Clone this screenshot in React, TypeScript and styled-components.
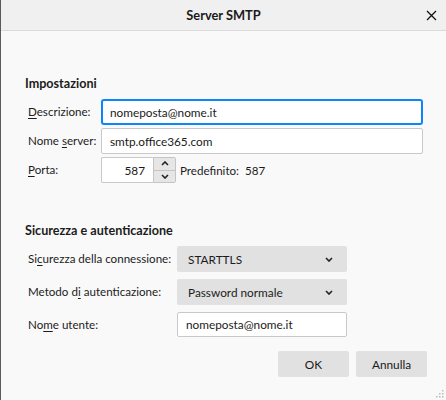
import * as React from 'react';
import styled, { createGlobalStyle } from 'styled-components';

const GlobalStyle = createGlobalStyle`
  html, body {
    margin: 0;
    padding: 0;
    background: #f9f9f9;
  }
  * {
    box-sizing: border-box;
  }
`;

const Chevron = ({ up }: { up?: boolean }) => (
  <svg width="8" height="5" viewBox="0 0 8 5">
    <polyline
      points={up ? '1,4 4,1 7,4' : '1,1 4,4 7,1'}
      fill="none"
      stroke="#222"
      strokeWidth="1.6"
    />
  </svg>
);

export default function App() {
  return (
    <>
      <GlobalStyle />
      <Frame>
        <TitleBar>
          <span />
          <Title>Server SMTP</Title>
          <CloseBtn>
            <svg width="11" height="11" viewBox="0 0 11 11">
              <path d="M1 1 L10 10 M10 1 L1 10" stroke="#111" strokeWidth="1.3" />
            </svg>
          </CloseBtn>
        </TitleBar>

        <Content>
          <Section $top={44}>
            <Heading>Impostazioni</Heading>
            <FormGrid $labelWidth={73} $gap={3}>
              <Label><u>D</u>escrizione:</Label>
              <TextInput $focused defaultValue="nomeposta@nome.it" $width={322} />
              <Label>Nome <u>s</u>erver:</Label>
              <TextInput defaultValue="smtp.office365.com" $width={322} />
              <Label><u>P</u>orta:</Label>
              <PortRow>
                <PortInput defaultValue="587" />
                <Spinner>
                  <SpinBtn><Chevron up /></SpinBtn>
                  <SpinBtn><Chevron /></SpinBtn>
                </Spinner>
                <DefaultText>Predefinito:&nbsp;&nbsp;587</DefaultText>
              </PortRow>
            </FormGrid>
          </Section>

          <Section $top={39}>
            <Heading>Sicurezza e autenticazione</Heading>
            <FormGrid $labelWidth={149} $gap={7}>
              <Label>Si<u>c</u>urezza della connessione:</Label>
              <Select>
                STARTTLS
                <Chevron />
              </Select>
              <Label>Metodo d<u>i</u> autenticazione:</Label>
              <Select>
                Password normale
                <Chevron />
              </Select>
              <Label>No<u>m</u>e utente:</Label>
              <TextInput defaultValue="nomeposta@nome.it" $width={170} $small />
            </FormGrid>
          </Section>

          <Buttons>
            <Button>OK</Button>
            <Button>Annulla</Button>
          </Buttons>
        </Content>

        <Grip width="8" height="8" viewBox="0 0 8 8">
          <rect x="6" y="0" width="1.5" height="1.5" fill="#bbb" />
          <rect x="3" y="3" width="1.5" height="1.5" fill="#bbb" />
          <rect x="6" y="3" width="1.5" height="1.5" fill="#bbb" />
          <rect x="0" y="6" width="1.5" height="1.5" fill="#bbb" />
          <rect x="3" y="6" width="1.5" height="1.5" fill="#bbb" />
          <rect x="6" y="6" width="1.5" height="1.5" fill="#bbb" />
        </Grip>
      </Frame>
    </>
  );
}

const Frame = styled.div`
  position: relative;
  width: 446px;
  height: 400px;
  background: #f9f9f9;
  border-left: 1px solid #5a5a5a;
  font-family: Lato, "Noto Sans", sans-serif;
  color: #1c1c1c;
  overflow: hidden;
`;

const TitleBar = styled.div`
  display: grid;
  grid-template-columns: 1fr auto 1fr;
  align-items: center;
  height: 31px;
  background: #f0f0f0;
  border-bottom: 1px solid #dadada;
`;

const Title = styled.div`
  font-size: 12.8px;
  font-weight: 700;
  color: #1a1a1a;
`;

const CloseBtn = styled.div`
  justify-self: end;
  display: flex;
  align-items: center;
  padding-right: 9px;
`;

const Content = styled.div`
  display: flex;
  flex-direction: column;
  padding: 0 19px 0 24px;
`;

const Section = styled.section<{ $top: number }>`
  display: flex;
  flex-direction: column;
  gap: 6px;
  margin-top: ${p => p.$top}px;
`;

const Heading = styled.div`
  font-size: 12.6px;
  font-weight: 700;
  line-height: 18px;
`;

const FormGrid = styled.div<{ $labelWidth: number; $gap: number }>`
  display: grid;
  grid-template-columns: ${p => p.$labelWidth}px auto;
  row-gap: ${p => p.$gap}px;
  align-items: center;
  justify-items: start;
  padding-left: 3px;
`;

const Label = styled.label`
  font-size: 11.6px;
  line-height: 16px;
  white-space: nowrap;

  u {
    text-decoration-thickness: 1px;
    text-underline-offset: 2px;
  }
`;

const TextInput = styled.input<{ $focused?: boolean; $width: number; $small?: boolean }>`
  width: ${p => p.$width}px;
  height: ${p => (p.$small ? 25 : 26)}px;
  padding: 0 ${p => (p.$focused ? 7 : 8)}px;
  font-family: inherit;
  font-size: 11.8px;
  color: #1a1a1a;
  background: #fff;
  border: ${p => (p.$focused ? '2px solid #0a84ff' : '1px solid #c9c9c9')};
  border-radius: ${p => (p.$focused ? 3 : 2)}px;
  outline: none;
`;

const PortRow = styled.div`
  display: flex;
  align-items: center;
`;

const PortInput = styled.input`
  width: 52px;
  height: 26px;
  padding: 0 8px;
  text-align: right;
  font-family: inherit;
  font-size: 11.8px;
  color: #1a1a1a;
  background: #fff;
  border: 1px solid #c9c9c9;
  border-right: none;
  border-radius: 2px 0 0 2px;
  outline: none;
`;

const Spinner = styled.div`
  display: flex;
  flex-direction: column;
  width: 23px;
  height: 26px;
  border: 1px solid #c4c4c4;
  border-radius: 0 2px 2px 0;
`;

const SpinBtn = styled.div`
  flex: 1;
  display: flex;
  align-items: center;
  justify-content: center;
  background: #e6e6e6;

  & + & {
    border-top: 1px solid #c4c4c4;
  }
`;

const DefaultText = styled.span`
  margin-left: 4px;
  font-size: 11.6px;
`;

const Select = styled.div`
  display: flex;
  align-items: center;
  justify-content: space-between;
  width: 170px;
  height: 26px;
  padding: 0 14px 0 11px;
  font-size: 11.8px;
  background: #e1e1e1;
  border-radius: 2px;
`;

const Buttons = styled.div`
  display: flex;
  justify-content: flex-end;
  gap: 7px;
  margin-top: 14px;
`;

const Button = styled.button`
  width: 71px;
  height: 26px;
  font-family: inherit;
  font-size: 11.8px;
  color: #1a1a1a;
  background: #e1e1e1;
  border: none;
  border-radius: 2px;
`;

const Grip = styled.svg`
  position: absolute;
  right: 2px;
  bottom: 2px;
`;
